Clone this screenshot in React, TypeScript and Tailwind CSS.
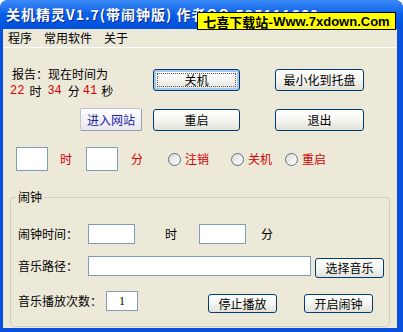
import React from "react";

const cjk = { fontFamily: '"Noto Sans CJK SC", "Liberation Sans", sans-serif' };

function XpButton({ label, className = "", focused = false }: { label: string; className?: string; focused?: boolean }) {
  return (
    <button
      className={`relative flex items-center justify-center rounded-[3px] border border-[#003c74] bg-gradient-to-b from-white via-[#f5f5f1] to-[#e2e1d9] text-[12px] text-black ${
        focused ? "shadow-[inset_0_0_0_2px_#a8c4f0]" : ""
      } ${className}`}
    >
      {focused && <span className="absolute inset-[3px] border border-dotted border-[#555]" />}
      <span className="relative leading-none">{label}</span>
    </button>
  );
}

function Radio({ label }: { label: string }) {
  return (
    <div className="flex items-center">
      <span className="h-[13px] w-[13px] rounded-full border border-[#5a7089] bg-gradient-to-br from-[#dcdcd6] to-white" />
      <span className="ml-[4px] text-[12px] text-[#d40000]">{label}</span>
    </div>
  );
}

export default function App() {
  return (
    <div className="relative h-[332px] w-[403px] overflow-hidden bg-white" style={cjk}>
      <div className="flex h-full w-full flex-col overflow-hidden rounded-t-[8px] bg-[#0850de]">
        {/* Title bar */}
        <div className="flex h-[29px] shrink-0 items-center bg-gradient-to-b from-[#3b8bf7] via-[#0a5ee8] to-[#0150dc] pl-[6px]">
          <span className="text-[14px] font-bold tracking-[1px] text-white [text-shadow:1px_1px_0_#0a2a8a]">
            关机精灵V1.7(带闹钟版) 作者QQ:595111660
          </span>
        </div>

        {/* Window body */}
        <div className="mb-[4px] ml-[3px] mr-[6px] flex flex-1 flex-col bg-[#ece9d8]">
          {/* Menu */}
          <div className="flex h-[19px] shrink-0 items-center gap-[12px] border-b border-white pl-[5px] text-[12px] text-black">
            <span>程序</span>
            <span>常用软件</span>
            <span>关于</span>
          </div>

          {/* Top section */}
          <div className="flex pt-[18px]">
            <div className="flex w-[150px] flex-col pl-[9px]">
              <div className="h-[16px] text-[12px] leading-[16px] text-black">报告：现在时间为</div>
              <div className="flex h-[18px] items-center text-[12px] leading-[18px] text-black">
                <span className="ml-[-2px] text-[12px] text-[#d40000]" style={{ fontFamily: '"Liberation Mono", monospace' }}>22</span>
                <span className="ml-[5px]">时</span>
                <span className="ml-[6px] text-[12px] text-[#d40000]" style={{ fontFamily: '"Liberation Mono", monospace' }}>34</span>
                <span className="ml-[6px]">分</span>
                <span className="ml-[3px] text-[12px] text-[#d40000]" style={{ fontFamily: '"Liberation Mono", monospace' }}>41</span>
                <span className="ml-[4px]">秒</span>
              </div>
              <button className="ml-[68px] mt-[8px] flex h-[23px] w-[62px] items-center justify-center rounded-[2px] border border-[#c3c3cc] border-b-[#9c9ca8] border-r-[#9c9ca8] bg-gradient-to-b from-white to-[#e8e8f0] text-[12px] text-[#1a22a8]">
                进入网站
              </button>
            </div>
            <div className="mt-[3px] flex flex-col gap-[18px]">
              <XpButton label="关机" focused className="h-[22px] w-[87px]" />
              <XpButton label="重启" className="h-[22px] w-[87px]" />
            </div>
            <div className="ml-[35px] mt-[3px] flex flex-col gap-[18px]">
              <XpButton label="最小化到托盘" className="h-[22px] w-[89px]" />
              <XpButton label="退出" className="h-[22px] w-[89px]" />
            </div>
          </div>

          {/* Countdown row */}
          <div className="mt-[16px] flex h-[24px] items-center text-[12px]">
            <div className="ml-[13px] h-[24px] w-[32px] border border-[#7f9db9] bg-white" />
            <span className="ml-[12px] text-[#d40000]">时</span>
            <div className="ml-[14px] h-[24px] w-[32px] border border-[#7f9db9] bg-white" />
            <span className="ml-[13px] text-[#d40000]">分</span>
            <div className="ml-[25px]">
              <Radio label="注销" />
            </div>
            <div className="ml-[22px]">
              <Radio label="关机" />
            </div>
            <div className="ml-[13px]">
              <Radio label="重启" />
            </div>
          </div>

          {/* Alarm group */}
          <fieldset className="mx-[7px] mt-[18px] rounded-[4px] border border-[#d0d0bf] pb-[13px] pl-[7px]">
            <legend className="ml-[-2px] px-[2px] text-[12px] leading-[16px] text-black">闹钟</legend>
            <div className="mt-[19px] flex h-[20px] items-center text-[12px] text-black">
              <span className="w-[70px]">闹钟时间：</span>
              <div className="h-[20px] w-[47px] border border-[#7f9db9] bg-white" />
              <span className="ml-[30px]">时</span>
              <div className="ml-[22px] h-[20px] w-[47px] border border-[#7f9db9] bg-white" />
              <span className="ml-[15px]">分</span>
            </div>
            <div className="mt-[12px] flex h-[22px] items-start text-[12px] text-black">
              <span className="flex h-[20px] w-[70px] items-center">音乐路径：</span>
              <div className="h-[20px] w-[223px] border border-[#7f9db9] bg-white" />
              <XpButton label="选择音乐" className="ml-[4px] mt-[2px] h-[20px] w-[69px]" />
            </div>
            <div className="mt-[13px] flex h-[22px] items-start text-[12px] text-black">
              <span className="flex h-[20px] w-[88px] items-center">音乐播放次数：</span>
              <div
                className="flex h-[20px] w-[32px] items-center justify-center border border-[#7f9db9] bg-white text-[12px]"
                style={{ fontFamily: '"Liberation Serif", serif' }}
              >
                1
              </div>
              <XpButton label="停止播放" className="ml-[70px] mt-[3px] h-[19px] w-[69px]" />
              <XpButton label="开启闹钟" className="ml-[27px] mt-[3px] h-[19px] w-[69px]" />
            </div>
          </fieldset>
        </div>
      </div>

      {/* Watermark overlay */}
      <div className="absolute left-[197px] top-[12px] flex h-[18px] w-[199px] items-center justify-center border border-black bg-[#ffff00] text-[13px] font-bold leading-none text-black">
        七喜下载站-
        <span style={{ fontFamily: '"Liberation Sans", sans-serif' }}>Www.7xdown.Com</span>
      </div>
    </div>
  );
}
